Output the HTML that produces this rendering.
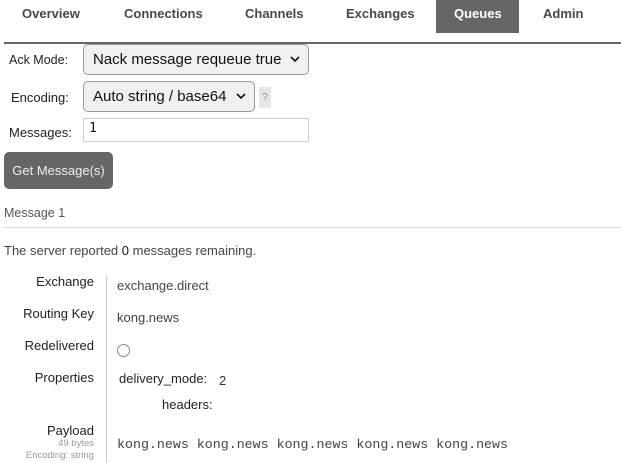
<!DOCTYPE html>
<html><head><style>
body{margin:0;width:621px;height:463px;overflow:hidden;background:#fff;font-family:"Liberation Sans",sans-serif;color:#333;position:relative}
.a{position:absolute;white-space:nowrap}
.nav{font-weight:bold;font-size:13px;color:#484848;top:6px}
.lbl{font-size:13px;color:#222}
.sel{position:absolute;border:1px solid #999;border-radius:5px;background:#f0f0f0;font-size:15px;color:#111;box-sizing:border-box;padding-left:9px;line-height:29px}
.sel svg{position:absolute;right:8px;top:11px}
.tl{font-size:13px;color:#222;text-align:right;right:527px}
.tv{font-size:13px;color:#444;left:117px}
.mono{font-family:"Liberation Mono",monospace;font-size:13.3px;color:#444}
</style></head><body>
<div class="a" style="left:436px;top:0;width:83px;height:33px;background:#666"></div>
<div class="a nav" style="left:22px">Overview</div>
<div class="a nav" style="left:124px">Connections</div>
<div class="a nav" style="left:245px">Channels</div>
<div class="a nav" style="left:346px">Exchanges</div>
<div class="a nav" style="left:454px;color:#fff">Queues</div>
<div class="a nav" style="left:543px">Admin</div>
<div class="a" style="left:4px;top:42px;width:617px;height:2px;background:#666"></div>

<div class="a lbl" style="left:9px;top:53px;font-size:12.5px">Ack Mode:</div>
<div class="sel" style="left:83px;top:44px;width:226px;height:31px">Nack message requeue true<svg width="10" height="7"><path d="M1 1l4 4 4-4" stroke="#111" stroke-width="1.6" fill="none"/></svg></div>
<div class="a lbl" style="left:11px;top:90px">Encoding:</div>
<div class="sel" style="left:83px;top:81px;width:172px;height:31px">Auto string / base64<svg width="10" height="7"><path d="M1 1l4 4 4-4" stroke="#111" stroke-width="1.6" fill="none"/></svg></div>
<div class="a" style="left:259px;top:87px;width:12px;height:21px;background:#e6e6e6;color:#888;font-size:10px;text-align:center;line-height:21px">?</div>
<div class="a lbl" style="left:9px;top:125px">Messages:</div>
<div class="a" style="left:83px;top:118px;width:226px;height:24px;border:1px solid #ccc;box-sizing:border-box;font-size:13px;padding:2px 0 0 5px;color:#111;font-family:'DejaVu Sans Mono',monospace">1</div>
<div class="a" style="left:4px;top:152px;width:109px;height:37px;background:#666;border-radius:5px;color:#eee;font-size:13px;text-align:center;line-height:37px">Get Message(s)</div>

<div class="a" style="left:4px;top:206px;font-size:12.5px;color:#555">Message 1</div>
<div class="a" style="left:4px;top:227px;width:617px;height:1px;background:#ddd"></div>
<div class="a" style="left:4px;top:243px;font-size:13px;color:#444">The server reported <span style="color:#111">0</span> messages remaining.</div>

<div class="a" style="left:106px;top:275px;width:1px;height:188px;background:#ccc"></div>
<div class="a tl" style="top:274px">Exchange</div>
<div class="a tv" style="top:278px">exchange.direct</div>
<div class="a tl" style="top:306px">Routing Key</div>
<div class="a tv" style="top:310px">kong.news</div>
<div class="a tl" style="top:338px">Redelivered</div>
<div class="a" style="left:117px;top:344px;width:11px;height:11px;border:1px solid #888;border-radius:50%"></div>
<div class="a tl" style="top:370px">Properties</div>
<div class="a" style="left:119px;top:371px;font-size:13px;color:#222">delivery_mode:</div>
<div class="a" style="left:219px;top:373px;font-size:13px;color:#333">2</div>
<div class="a" style="left:162px;top:397px;font-size:13px;color:#222">headers:</div>
<div class="a tl" style="top:423px">Payload</div>
<div class="a tl" style="top:438px;font-size:9.5px;color:#999">49 bytes</div>
<div class="a tl" style="top:450px;font-size:9.5px;color:#999">Encoding: string</div>
<div class="a mono" style="left:117px;top:437px">kong.news kong.news kong.news kong.news kong.news</div>
</body></html>
